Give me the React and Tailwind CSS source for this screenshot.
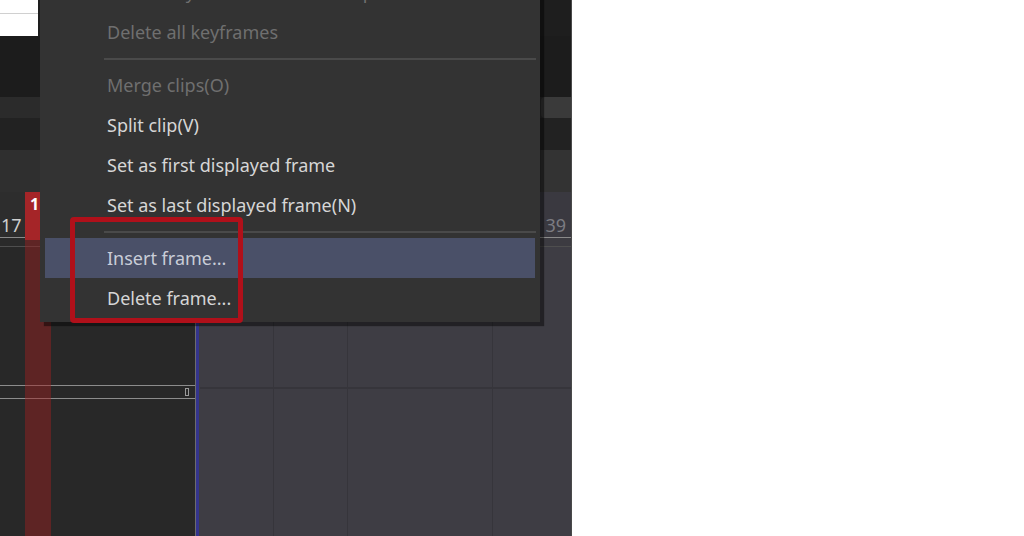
import React from 'react'

const font = { fontFamily: '"Noto Sans", "Open Sans", sans-serif' }

const items = [
  { label: 'Delete keyframes at the same position', disabled: true },
  { label: 'Delete all keyframes', disabled: true },
  { sep: true },
  { label: 'Merge clips(O)', disabled: true },
  { label: 'Split clip(V)' },
  { label: 'Set as first displayed frame' },
  { label: 'Set as last displayed frame(N)' },
  { sep: true },
  { label: 'Insert frame...', active: true },
  { label: 'Delete frame...' },
]

function ContextMenu() {
  return (
    <div
      className="absolute left-[40px] top-[-28px] w-[500px] bg-[#333333] pb-[4px] shadow-[4px_4px_1px_rgba(0,0,0,0.45)]"
      style={font}
    >
      {items.map((it, i) =>
        it.sep ? (
          <div key={i} className="h-[13px] flex items-center pl-[64px] pr-[4px]">
            <div className="h-[2px] w-full bg-[#4a4a4a]" />
          </div>
        ) : (
          <div key={i} className="h-[40px] px-[5px]">
            <div
              className={`h-full flex items-center pl-[62px] text-[18px] ${
                it.active ? 'bg-[#4a5068] text-[#c9cdd8]' : it.disabled ? 'text-[#6f6f6f]' : 'text-[#d6d6d6]'
              }`}
            >
              {it.label}
            </div>
          </div>
        )
      )}
    </div>
  )
}

function Timeline() {
  return (
    <div className="relative w-[572px] h-[536px] overflow-hidden flex flex-col bg-[#1e1e1e] border-r border-[#4a4a4a]">
      {/* top toolbar strip */}
      <div className="h-[36px] flex">
        <div className="w-[38px] bg-white flex flex-col">
          <div className="h-[13px]" />
          <div className="h-[1px] bg-[#d0d0d0]" />
        </div>
        <div className="flex-1 bg-[#1e1e1e]" />
      </div>
      <div className="h-[61px] bg-[#1c1c1c]" />
      <div className="h-[21px] bg-[#2b2b2b] flex">
        <div className="ml-auto w-[30px] bg-[#3a3a3a] rounded-l-[4px]" />
      </div>
      <div className="h-[32px] bg-[#222222]" />
      <div className="h-[42px] bg-[#2f2f2f] flex">
        <div className="ml-auto w-[30px] bg-[#333333]" />
      </div>

      {/* ruler */}
      <div className="h-[46px] flex border-b border-[#8a8a8a]" style={font}>
        <div className="w-[200px] bg-[#2d2d2d] flex items-end pb-[1px]">
          <span className="pl-[1px] text-[18px] leading-none mb-[2px] text-[#cfcfcf]">17</span>
        </div>
        <div className="flex-1 bg-[#3a3940] flex items-end justify-end pr-[5px] pb-[3px]">
          <span className="text-[18px] leading-none text-[#7c7c82]">39</span>
        </div>
      </div>
      <div className="h-[9px] flex border-b border-[#4e4e4e]">
        <div className="w-[200px] bg-[#2a2a2a]" />
        <div className="flex-1 bg-[#3c3b41]" />
      </div>

      {/* tracks */}
      <div className="flex-1 flex">
        <div className="w-[195px] bg-[#282828] flex flex-col">
          <div className="h-[138px]" />
          <div className="h-[14px] border-y border-[#8c8c8c] flex justify-end">
            <div className="w-[4px] mr-[6px] my-[2px] border border-[#9a9a9a]" />
          </div>
        </div>
        <div className="w-[1px] bg-[#6c6c6c]" />
        <div className="w-[3px] bg-[#34348c]" />
        <div className="flex-1 bg-[#3e3d44] flex">
          <div className="w-[75px] border-r border-[#36353b]" />
          <div className="w-[74px] border-r border-[#36353b]" />
          <div className="w-[145px] border-r border-[#36353b]" />
          <div className="flex-1" />
        </div>
      </div>

      {/* playhead */}
      <div className="absolute left-[25px] top-[192px] bottom-0 w-[26px] bg-[rgba(160,30,30,0.45)]" />
      <div className="absolute left-[25px] top-[192px] w-[26px] h-[48px] bg-[#a52528] text-white text-[16px] font-bold leading-none pl-[5px] pt-[4px] tracking-[5px]" style={font}>
        18
      </div>

      {/* grid horizontal line */}
      <div className="absolute left-[200px] right-0 top-[387px] h-[2px] bg-[#36353b]" />

      <ContextMenu />

      {/* highlight annotation */}
      <div className="absolute left-[70px] top-[217px] w-[173px] h-[106px] border-[5px] border-[#b0101a] rounded-[4px]" />
    </div>
  )
}

export default function App() {
  return (
    <div className="w-[1024px] h-[536px] flex bg-white overflow-hidden">
      <Timeline />
      <div className="flex-1 bg-white" />
    </div>
  )
}
